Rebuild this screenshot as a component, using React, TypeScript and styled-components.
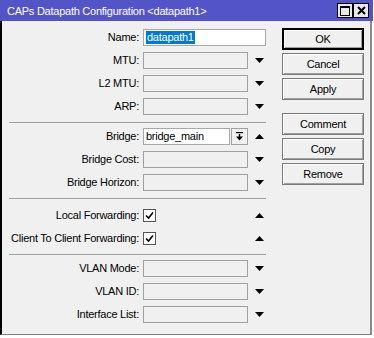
import styled, { createGlobalStyle } from "styled-components";

const GlobalStyle = createGlobalStyle`
  html, body {
    margin: 0;
    background: #fff;
  }
  body {
    font-family: "Liberation Sans", Arial, sans-serif;
    font-size: 11px;
    letter-spacing: -0.25px;
    color: #000;
  }
`;

const Window = styled.div`
  width: 373px;
  height: 335px;
  display: flex;
  flex-direction: column;
`;

const TitleBar = styled.div`
  height: 21px;
  flex: none;
  background: #5454c9;
  color: #fff;
  display: flex;
  align-items: center;
  justify-content: space-between;
  padding: 0 4px 0 7px;
  box-sizing: border-box;
  font-size: 11px;
`;

const TitleButtons = styled.div`
  display: flex;
  gap: 0;
`;

const TitleButton = styled.div`
  width: 16px;
  height: 15px;
  box-sizing: border-box;
  background: #e8e8e8;
  border: 1px solid #000;
  display: flex;
  align-items: center;
  justify-content: center;
`;

const Body = styled.div`
  flex: 1;
  width: 372px;
  box-sizing: border-box;
  background: #f0f0f0;
  border-left: 2px solid #000;
  border-right: 2px solid #8a8a8a;
  border-bottom: 1px solid #808080;
  padding: 7px 0 0 7px;
  display: flex;
`;

const Form = styled.div`
  width: 257px;
  display: flex;
  flex-direction: column;
  padding-top: 1px;
`;

const Section = styled.div<{ $padTop?: number }>`
  display: flex;
  flex-direction: column;
  gap: 6px;
  padding-top: ${(p) => p.$padTop ?? 0}px;
`;

const Separator = styled.div`
  height: 0;
  border-top: 1px solid #a0a0a0;
  margin: 7px 0 5px;
`;

const Row = styled.div`
  display: flex;
  align-items: center;
  height: 17px;
`;

const Label = styled.div`
  width: 130px;
  margin-right: 4px;
  text-align: right;
  white-space: nowrap;
  line-height: 17px;
`;

const Input = styled.div<{ $width?: number; $enabled?: boolean }>`
  width: ${(p) => p.$width ?? 105}px;
  height: 17px;
  box-sizing: border-box;
  border: 1px solid ${(p) => (p.$enabled ? "#a8a8a8" : "#a0a0a0")};
  background: ${(p) => (p.$enabled ? "#fff" : "#f0f0f0")};
  line-height: 15px;
  padding-left: 2px;
  white-space: nowrap;
  overflow: hidden;
`;

const Selected = styled.span`
  background: #0078d7;
  color: #fff;
  padding: 0 1px 1px;
`;

const DropButton = styled.div`
  width: 17px;
  height: 17px;
  margin-left: 1px;
  box-sizing: border-box;
  border: 1px solid #a0a0a0;
  background: #f0f0f0;
  display: flex;
  align-items: center;
  justify-content: center;
`;

const Arrow = styled.svg`
  margin-left: 7px;
  flex: none;
`;

const CheckBox = styled.div`
  width: 13px;
  height: 13px;
  box-sizing: border-box;
  border: 1px solid #555;
  background: #fff;
  display: flex;
  align-items: center;
  justify-content: center;
`;

const CheckSpacer = styled.div`
  width: 92px;
`;

const Buttons = styled.div`
  margin-left: 16px;
  width: 82px;
  display: flex;
  flex-direction: column;
`;

const ButtonGroup = styled.div`
  display: flex;
  flex-direction: column;
  gap: 3px;
  & + & {
    margin-top: 13px;
  }
`;

const Button = styled.div<{ $default?: boolean }>`
  height: 22px;
  box-sizing: border-box;
  border: 1px solid ${(p) => (p.$default ? "#000" : "#7a7a7a")};
  background: #f0f0f0;
  box-shadow: ${(p) =>
    p.$default
      ? "inset 1px 1px 0 #000, inset -1px -1px 0 #000, inset 2px 2px 0 #fff, inset -2px -2px 0 #a0a0a0"
      : "inset 1px 1px 0 #fff, inset -1px -1px 0 #a0a0a0"};
  display: flex;
  align-items: center;
  justify-content: center;
  font-size: 11px;
`;

const Down = () => (
  <Arrow width="9" height="5" viewBox="0 0 9 5">
    <polygon points="0,0 9,0 4.5,5" fill="#000" />
  </Arrow>
);

const Up = () => (
  <Arrow width="9" height="5" viewBox="0 0 9 5">
    <polygon points="0,5 9,5 4.5,0" fill="#000" />
  </Arrow>
);

const Check = () => (
  <svg width="9" height="9" viewBox="0 0 9 9">
    <polyline points="1,4.5 3.5,7 8,1.5" fill="none" stroke="#000" strokeWidth="1.6" />
  </svg>
);

const TextRow = ({ label, arrow = true }: { label: string; arrow?: boolean }) => (
  <Row>
    <Label>{label}:</Label>
    <Input />
    {arrow && <Down />}
  </Row>
);

const CheckRow = ({ label }: { label: string }) => (
  <Row>
    <Label>{label}:</Label>
    <CheckBox>
      <Check />
    </CheckBox>
    <CheckSpacer />
    <Up />
  </Row>
);

export default function App() {
  return (
    <>
      <GlobalStyle />
      <Window>
        <TitleBar>
          <span>CAPs Datapath Configuration &lt;datapath1&gt;</span>
          <TitleButtons>
            <TitleButton>
              <svg width="10" height="10" viewBox="0 0 10 10">
                <rect x="0.5" y="0.5" width="9" height="9" fill="none" stroke="#000" />
                <rect x="0" y="0" width="10" height="2" fill="#000" />
              </svg>
            </TitleButton>
            <TitleButton>
              <svg width="9" height="9" viewBox="0 0 9 9">
                <path d="M1 1 L8 8 M8 1 L1 8" stroke="#000" strokeWidth="2" />
              </svg>
            </TitleButton>
          </TitleButtons>
        </TitleBar>
        <Body>
          <Form>
            <Section>
              <Row>
                <Label>Name:</Label>
                <Input $width={123} $enabled>
                  <Selected>datapath1</Selected>
                </Input>
              </Row>
              <TextRow label="MTU" />
              <TextRow label="L2 MTU" />
              <TextRow label="ARP" />
            </Section>
            <Separator />
            <Section>
              <Row>
                <Label>Bridge:</Label>
                <Input $width={87} $enabled>
                  bridge_main
                </Input>
                <DropButton>
                  <svg width="9" height="9" viewBox="0 0 9 9">
                    <rect x="1" y="0" width="7" height="1.2" fill="#000" />
                    <rect x="3.8" y="2" width="1.4" height="3" fill="#000" />
                    <polygon points="1,4.5 8,4.5 4.5,8.5" fill="#000" />
                  </svg>
                </DropButton>
                <Up />
              </Row>
              <TextRow label="Bridge Cost" />
              <TextRow label="Bridge Horizon" />
            </Section>
            <Separator />
            <Section $padTop={3}>
              <CheckRow label="Local Forwarding" />
              <CheckRow label="Client To Client Forwarding" />
            </Section>
            <Separator />
            <Section>
              <TextRow label="VLAN Mode" />
              <TextRow label="VLAN ID" />
              <TextRow label="Interface List" />
            </Section>
          </Form>
          <Buttons>
            <ButtonGroup>
              <Button $default>OK</Button>
              <Button>Cancel</Button>
              <Button>Apply</Button>
            </ButtonGroup>
            <ButtonGroup>
              <Button>Comment</Button>
              <Button>Copy</Button>
              <Button>Remove</Button>
            </ButtonGroup>
          </Buttons>
        </Body>
      </Window>
    </>
  );
}
